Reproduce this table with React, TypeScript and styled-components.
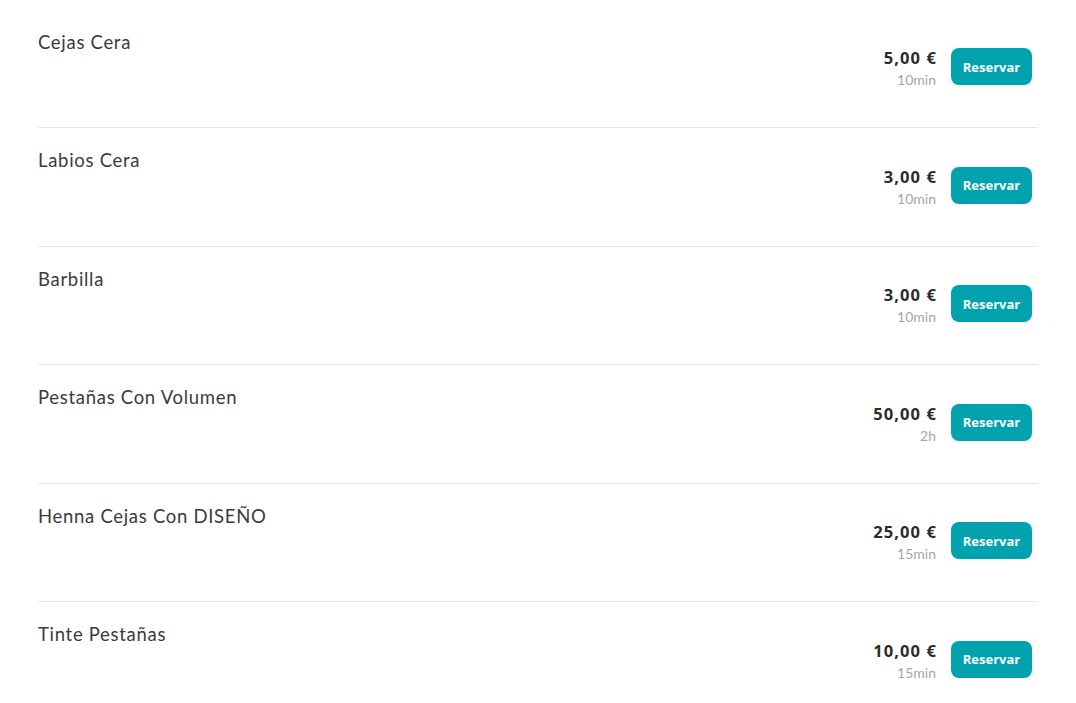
import React from "react";
import styled, { createGlobalStyle } from "styled-components";

const Global = createGlobalStyle`
  html, body { margin: 0; padding: 0; background: #fff; }
  body { font-family: Lato, "Open Sans", sans-serif; }
`;

const List = styled.div`
  max-width: 1000px;
  margin: 0 auto;
  padding-top: 9.5px;
`;

const Row = styled.div`
  display: flex;
  justify-content: space-between;
  align-items: center;
  min-height: 117.5px;
  border-bottom: 1px solid #e6e6e6;
  &:last-child { border-bottom: none; }
`;

const Title = styled.div`
  align-self: flex-start;
  padding-top: 20px;
  font-size: 18.5px;
  letter-spacing: 0.7px;
  line-height: 24px;
  color: #3b3b3b;
`;

const Right = styled.div`
  display: flex;
  align-items: center;
  gap: 14px;
  margin-right: 6px;
`;

const PriceBlock = styled.div`
  display: flex;
  flex-direction: column;
  align-items: flex-end;
  padding-top: 2px;
`;

const Price = styled.div`
  font-family: "Open Sans", sans-serif;
  font-size: 16.5px;
  font-weight: 700;
  letter-spacing: 1.1px;
  line-height: 20px;
  color: #2b2b2b;
`;

const Duration = styled.div`
  margin-top: 2px;
  margin-right: 1px;
  font-family: Lato, sans-serif;
  font-size: 14px;
  line-height: 20px;
  color: #a6a6a6;
`;

const Button = styled.button`
  width: 81px;
  height: 37px;
  border: none;
  border-radius: 8px;
  background: #00a3ad;
  color: #fff;
  font-family: "Open Sans", sans-serif;
  font-weight: 700;
  font-size: 13px;
  padding: 0;
  margin-bottom: 3px;
  cursor: pointer;
`;

const items = [
  { name: "Cejas Cera", price: "5,00 €", dur: "10min" },
  { name: "Labios Cera", price: "3,00 €", dur: "10min" },
  { name: "Barbilla", price: "3,00 €", dur: "10min" },
  { name: "Pestañas Con Volumen", price: "50,00 €", dur: "2h" },
  { name: "Henna Cejas Con DISEÑO", price: "25,00 €", dur: "15min" },
  { name: "Tinte Pestañas", price: "10,00 €", dur: "15min" },
];

export default function App() {
  return (
    <>
      <Global />
      <List>
        {items.map((it) => (
          <Row key={it.name}>
            <Title>{it.name}</Title>
            <Right>
              <PriceBlock>
                <Price>{it.price}</Price>
                <Duration>{it.dur}</Duration>
              </PriceBlock>
              <Button>Reservar</Button>
            </Right>
          </Row>
        ))}
      </List>
    </>
  );
}
